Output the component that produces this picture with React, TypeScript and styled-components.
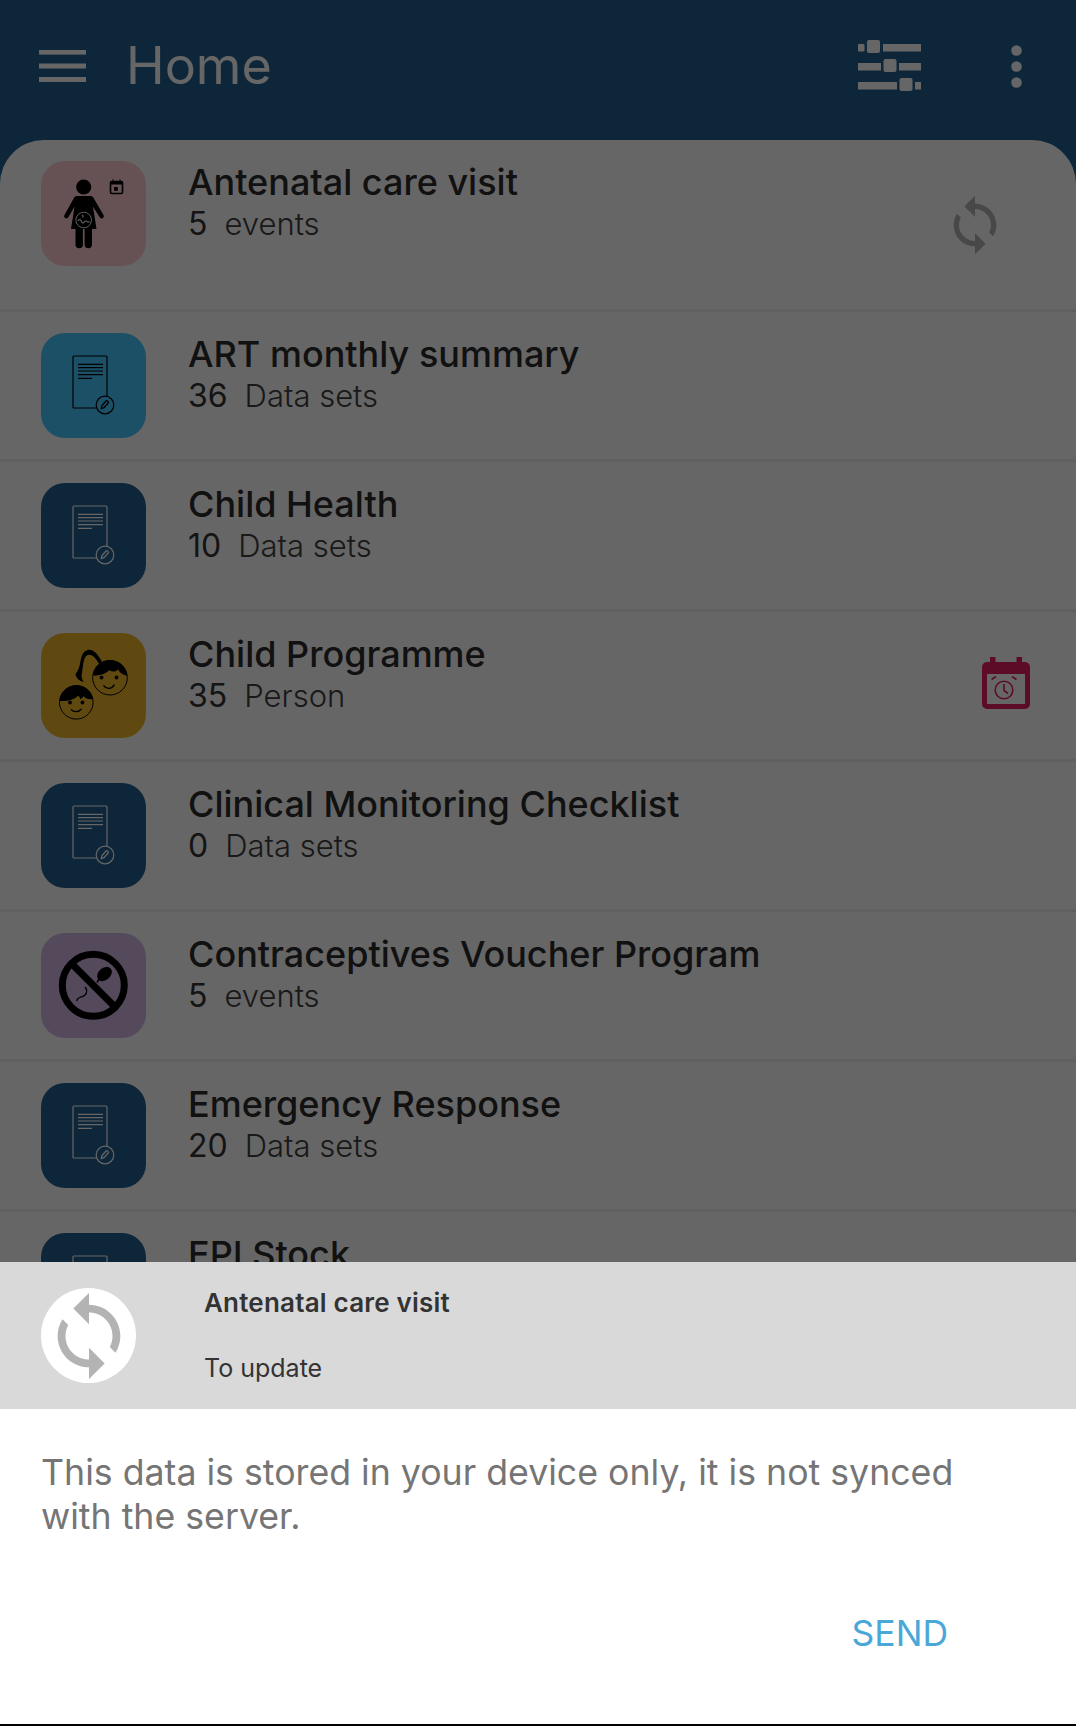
import React from "react";
import styled, { createGlobalStyle } from "styled-components";

const Global = createGlobalStyle`
  html, body { margin: 0; padding: 0; background: #000; }
  * { box-sizing: border-box; }
`;

const FONT = `Inter, "Noto Sans", sans-serif`;

const Page = styled.div`
  position: relative;
  width: 1076px;
  height: 1726px;
  overflow: hidden;
  font-family: ${FONT};
  background: #235f8e;
`;
const Header = styled.header`
  height: 140px;
  display: flex;
  align-items: center;
  padding: 0 38px 8px 39px;
  color: #fff;
`;
const HeaderTitle = styled.h1`
  margin: 0 0 0 40px;
  flex: 1;
  font-size: 52px;
  line-height: 1;
  font-weight: 400;
`;
const HeaderActions = styled.div`
  display: flex;
  align-items: center;
  gap: 89px;
  margin-right: 16px;
`;
const List = styled.main`
  height: 1586px;
  background: #fff;
  border-radius: 44px 44px 0 0;
  overflow: hidden;
`;
const Row = styled.div<{ $first?: boolean }>`
  position: relative;
  height: ${(p) => (p.$first ? 172 : 150)}px;
  padding: 21px 41px 0;
  display: flex;
  border-bottom: 3px solid #f0f0f0;
`;
const Tile = styled.div<{ $bg: string }>`
  flex: none;
  width: 105px;
  height: 105px;
  border-radius: 24px;
  background: ${(p) => p.$bg};
  svg { display: block; }
`;
const RowText = styled.div`
  margin-left: 42px;
  padding-top: 1px;
  flex: 1;
  color: #2b2b2b;
`;
const RowTitle = styled.div`
  font-size: 36px;
  line-height: 40px;
  font-weight: 500;
  white-space: nowrap;
`;
const RowMeta = styled.div`
  margin-top: 2px;
  display: flex;
  gap: 17px;
  line-height: 40px;
  color: #404040;
`;
const RowCount = styled.span`
  font-size: 32px;
  color: #333;
`;
const RowUnit = styled.span`
  font-size: 31px;
  font-weight: 300;
`;
const Trailing = styled.div<{ $right: number; $lift: number }>`
  position: absolute;
  top: 0;
  bottom: 0;
  right: ${(p) => p.$right}px;
  padding-bottom: ${(p) => p.$lift}px;
  display: flex;
  align-items: center;
`;
const Scrim = styled.div`
  position: absolute;
  inset: 0;
  background: rgba(0, 0, 0, 0.6);
`;
const Sheet = styled.section`
  position: absolute;
  left: 0;
  right: 0;
  bottom: 0;
  height: 464px;
  background: #fff;
  border-bottom: 2px solid #000;
`;
const SheetHead = styled.div`
  height: 147px;
  background: #d9d9d9;
  display: flex;
  padding: 26px 41px 0;
`;
const SheetBadge = styled.div`
  flex: none;
  width: 95px;
  height: 95px;
  border-radius: 50%;
  background: #fff;
  display: flex;
  align-items: center;
  justify-content: center;
`;
const SheetHeadText = styled.div`
  margin-left: 68px;
  color: #333;
  line-height: 32px;
`;
const SheetTitle = styled.div`
  font-size: 26px;
  font-weight: 600;
  letter-spacing: 0.2px;
  margin-top: -1px;
`;
const SheetSub = styled.div`
  font-size: 25px;
  margin-top: 33px;
`;
const SheetBody = styled.p`
  margin: 0;
  padding: 41px 80px 0 41px;
  font-size: 35.7px;
  line-height: 44px;
  color: #757575;
`;
const SheetActions = styled.div`
  display: flex;
  justify-content: flex-end;
  padding: 74px 128px 0 0;
`;
const SendButton = styled.button`
  border: 0;
  padding: 0;
  background: none;
  font-family: inherit;
  font-size: 35.5px;
  line-height: 44px;
  color: #4aa8d8;
`;

const SYNC =
  "M12 4V1L8 5l4 4V6c3.31 0 6 2.69 6 6 0 1.01-.25 1.97-.7 2.8l1.46 1.46C19.54 15.03 20 13.57 20 12c0-4.42-3.58-8-8-8zm0 14c-3.31 0-6-2.69-6-6 0-1.01.25-1.97.7-2.8L5.24 7.74C4.46 8.97 4 10.43 4 12c0 4.42 3.58 8 8 8v3l4-4-4-4v3z";

const SyncIcon = ({ size, color }: { size: number; color: string }) => (
  <svg width={size} height={size} viewBox="0 0 24 24">
    <path d={SYNC} fill={color} />
  </svg>
);

const Menu = () => (
  <svg width="47" height="32" viewBox="0 0 47 32" fill="#fff">
    <rect y="0" width="47" height="4.6" />
    <rect y="13.5" width="47" height="5" />
    <rect y="27" width="47" height="5" />
  </svg>
);

const Sliders = () => (
  <svg width="64" height="52" viewBox="0 0 64 52" fill="#fff">
    <rect x="0" y="4" width="6.5" height="7.5" rx="1" />
    <rect x="9" y="0" width="13" height="13" rx="2" />
    <rect x="25" y="4" width="38" height="7.5" />
    <rect x="0" y="23" width="23" height="7.5" />
    <rect x="25.5" y="19" width="13" height="13" rx="2" />
    <rect x="41" y="23" width="22" height="7.5" />
    <rect x="0" y="42" width="39" height="7.5" />
    <rect x="41.5" y="38" width="13" height="13" rx="2" />
    <rect x="57" y="42" width="6" height="7.5" />
  </svg>
);

const Dots = () => (
  <svg width="11" height="43" viewBox="0 0 11 43" fill="#fff">
    <circle cx="5.5" cy="5.5" r="5.3" />
    <circle cx="5.5" cy="21.5" r="5.3" />
    <circle cx="5.5" cy="37.5" r="5.3" />
  </svg>
);

const DocIcon = ({ color }: { color: string }) => (
  <svg width="105" height="105" viewBox="0 0 105 105" fill="none" stroke={color} strokeWidth="1.2">
    <path d="M55 75H33a1 1 0 0 1-1-1V24a1 1 0 0 1 1-1h32a1 1 0 0 1 1 1v39" />
    <path d="M37 31.3h25M37 34.7h25M37 38h25M37 41.7h25M37 45.3h14" strokeWidth="1.2" />
    <circle cx="64" cy="72" r="8.8" />
    <path d="M60.3 75.6l.7-3 4-4.6a1 1 0 0 1 1.5 0l.6.6a1 1 0 0 1 0 1.4l-4 4.6z" strokeWidth="1.3" />
  </svg>
);

const MotherIcon = () => (
  <svg width="105" height="105" viewBox="0 0 105 105">
    <circle cx="42.7" cy="26" r="7.6" fill="#000" />
    <path
      d="M36 35h13.5c1.5 0 2.6.8 3.2 2.2L62.5 54c.7 1.5.1 2.8-1 3.3-1.2.5-2.3 0-3-1.2L52 45.5 55.5 68H51v15.5a3.7 3.7 0 0 1-7.4 0V68h-1.7v15.5a3.7 3.7 0 0 1-7.4 0V68H30l3.5-22.5-6 10.6c-.7 1.2-1.8 1.7-3 1.2-1.1-.5-1.700-1.800-1-3.300l9.300-16.800c.6-1.400 1.700-2.200 3.200-2.200z"
      fill="#000"
    />
    <circle cx="42.7" cy="59" r="7.8" fill="#000" stroke="#fff" strokeWidth="0.9" />
    <path
      d="M37 60c1-2 2-2 3-.5.8 1.5 1 2.5 2 2.5s1.5-2 3-2c1.5 0 1.5 2 3.5.5M41 54c1.2.5 1.5 1.5.5 2.500"
      fill="none"
      stroke="#fff"
      strokeWidth="1.1"
    />
    <rect x="69.5" y="20.5" width="12" height="12" rx="1.2" fill="none" stroke="#000" strokeWidth="1.6" />
    <rect x="69.5" y="20.5" width="12" height="3" fill="#000" />
    <path d="M72 18.5v2.5M79 18.5v2.5" stroke="#000" strokeWidth="1.2" />
    <rect x="73" y="26" width="3.8" height="3.8" fill="#000" />
  </svg>
);

const KidsIcon = () => (
  <svg width="105" height="105" viewBox="0 0 105 105" fill="none" stroke="#000">
    <circle cx="69" cy="44.7" r="17.3" strokeWidth="1" />
    <circle cx="35.3" cy="69.3" r="16.8" strokeWidth="1" />
    <path
      d="M52 42.5c1-10 8.5-15.3 17-15.3 9.500 0 16.500 6.500 17.300 15.500-3.500-.5-7.500-2.500-9-6.500-2.500 3-6 2.800-9.200 1-3 3.500-10 5.500-16.100 5.300z"
      fill="#000"
      stroke="none"
    />
    <path
      d="M18.7 68c.5-9 7.5-15.5 16.600-15.500 9 0 15.800 6 16.700 13.500-3.500.8-7.500-.3-9.700-3-.5 1.500-1.200 2.300-3 3.300-.3-1.300-.8-2.500-2-3.800-3 3.800-10.500 6-18.600 5.500z"
      fill="#000"
      stroke="none"
    />
    <path
      d="M61 29C57 21 52 16 47 17c-6 1-7 8-8 14-1 5-3 8-4.500 10 .5 4 3.500 7 8.500 8-3-3-2.500-7-1.500-13 1-7 1.500-13 5.500-14 4-1 8 3 11 9z"
      fill="#000"
      stroke="none"
    />
    <circle cx="60.5" cy="44.5" r="1.9" fill="#000" stroke="none" />
    <circle cx="75.5" cy="44.5" r="1.9" fill="#000" stroke="none" />
    <path d="M62.5 52.5c3 4 8 4 11-.8" strokeWidth="1.3" />
    <circle cx="29" cy="69.5" r="1.9" fill="#000" stroke="none" />
    <circle cx="41.5" cy="69.5" r="1.9" fill="#000" stroke="none" />
    <path d="M30 76.5c2.5 3 7.5 3 10.5-.5" strokeWidth="1.3" />
  </svg>
);

const NoSpermIcon = () => (
  <svg width="105" height="105" viewBox="0 0 105 105" fill="none" stroke="#000">
    <circle cx="52.3" cy="52.3" r="31" strokeWidth="7" />
    <path d="M31 31l43 43" strokeWidth="7" />
    <ellipse cx="63.5" cy="41" rx="8.3" ry="6" transform="rotate(-42 63.5 41)" fill="#000" stroke="none" />
    <path d="M58 46l-2 3.5" strokeWidth="1.6" />
    <path d="M44 54c2.5 2.5 2 6 0 8-2 2-3.5 1.5-5.5 2.5-1.5.7-2.5 2-3 3.5" strokeWidth="1.3" />
  </svg>
);

const CalendarAlarm = () => (
  <svg width="48" height="52" viewBox="0 0 48 52" fill="none">
    <path
      fillRule="evenodd"
      fill="#e91e63"
      d="M8 0h5.500v5h21V0H40v5h3a5 5 0 0 1 5 5v37a5 5 0 0 1-5 5H5a5 5 0 0 1-5-5V10a5 5 0 0 1 5-5h3zM5 17v30h38V17z"
    />
    <g stroke="#e91e63" strokeWidth="1.6">
      <circle cx="22" cy="33" r="8.8" />
      <path d="M22 27v6.5l4 3M9.5 22.500l4.500-3M34.500 22.500l-4.500-3" />
    </g>
  </svg>
);

type Item = {
  title: string;
  count?: string;
  unit?: string;
  bg: string;
  icon: React.ReactNode;
  trailing?: React.ReactNode;
  right?: number;
  lift?: number;
};

const PRIMARY = "#235f8e";

const items: Item[] = [
  {
    title: "Antenatal care visit",
    count: "5",
    unit: "events",
    bg: "#ffcdd2",
    icon: <MotherIcon />,
    trailing: <SyncIcon size={64} color="#b3b3b3" />,
    right: 69,
  },
  { title: "ART monthly summary", count: "36", unit: "Data sets", bg: "#47c7ff", icon: <DocIcon color="#000" /> },
  { title: "Child Health", count: "10", unit: "Data sets", bg: PRIMARY, icon: <DocIcon color="#fff" /> },
  {
    title: "Child Programme",
    count: "35",
    unit: "Person",
    bg: "#eeb72c",
    icon: <KidsIcon />,
    trailing: <CalendarAlarm />,
    right: 46,
    lift: 6,
  },
  { title: "Clinical Monitoring Checklist", count: "0", unit: "Data sets", bg: PRIMARY, icon: <DocIcon color="#fff" /> },
  { title: "Contraceptives Voucher Program", count: "5", unit: "events", bg: "#d5b8e6", icon: <NoSpermIcon /> },
  { title: "Emergency Response", count: "20", unit: "Data sets", bg: PRIMARY, icon: <DocIcon color="#fff" /> },
  { title: "EPI Stock", bg: PRIMARY, icon: <DocIcon color="#fff" /> },
];

export default function App() {
  return (
    <Page>
      <Global />
      <Header>
        <Menu />
        <HeaderTitle>Home</HeaderTitle>
        <HeaderActions>
          <Sliders />
          <Dots />
        </HeaderActions>
      </Header>
      <List>
        {items.map((it, i) => (
          <Row key={it.title} $first={i === 0}>
            <Tile $bg={it.bg}>{it.icon}</Tile>
            <RowText>
              <RowTitle>{it.title}</RowTitle>
              {it.count && (
                <RowMeta>
                  <RowCount>{it.count}</RowCount>
                  <RowUnit>{it.unit}</RowUnit>
                </RowMeta>
              )}
            </RowText>
            {it.trailing && (
              <Trailing $right={it.right ?? 0} $lift={it.lift ?? 0}>
                {it.trailing}
              </Trailing>
            )}
          </Row>
        ))}
      </List>
      <Scrim />
      <Sheet>
        <SheetHead>
          <SheetBadge>
            <SyncIcon size={94} color="#b3b3b3" />
          </SheetBadge>
          <SheetHeadText>
            <SheetTitle>Antenatal care visit</SheetTitle>
            <SheetSub>To update</SheetSub>
          </SheetHeadText>
        </SheetHead>
        <SheetBody>This data is stored in your device only, it is not synced with the server.</SheetBody>
        <SheetActions>
          <SendButton>SEND</SendButton>
        </SheetActions>
      </Sheet>
    </Page>
  );
}
